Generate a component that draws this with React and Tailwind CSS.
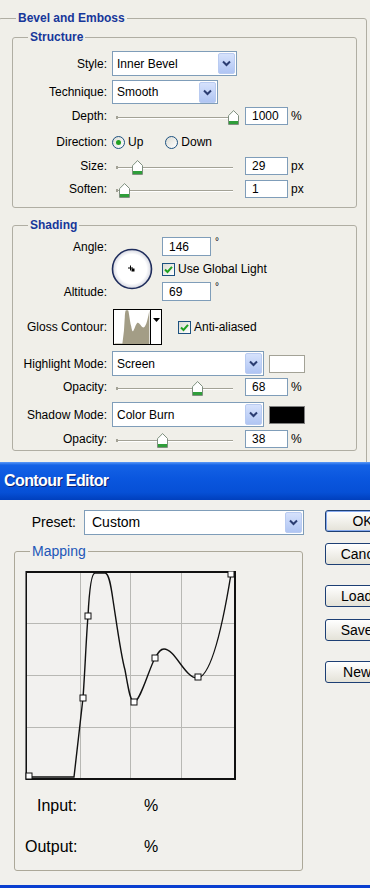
import React from "react";

const CURVE =
  "M4,206 L49,206 L58,127 C60,100 61,70 63,45 C64,25 66,2 70,2 L80,2 C84,2 86,15 88,29 C92,55 96,85 100,99 C103,115 105,131 109,131 C115,131 124,98 130,87 C133,82 135,78 139,78 C150,78 160,107 172,107 C188,107 200,40 206,3";

function Chevron() {
  return (
    <svg width="9" height="7" viewBox="0 0 9 7">
      <path d="M1 1.5 L4.5 5 L8 1.5" stroke="#2b3d72" strokeWidth="2" fill="none" />
    </svg>
  );
}

function DropBtn() {
  return (
    <div className="w-[17px] h-[21px] rounded-[2px] bg-linear-to-b from-[#d6e2fc] to-[#b0c5f3] border border-[#b9cbf1] flex items-center justify-center">
      <Chevron />
    </div>
  );
}

function Select({ text, className }) {
  return (
    <div className={"flex items-center justify-between border border-[#7f9db9] bg-white pl-[4px] pr-[1px] " + className}>
      <span>{text}</span>
      <DropBtn />
    </div>
  );
}

function NumBox({ v, className = "w-[43px] h-[18px]" }) {
  return (
    <div className={"border border-[#7f9db9] bg-white pl-[6px] flex items-center " + className}>{v}</div>
  );
}

function Thumb() {
  return (
    <svg width="11" height="15" viewBox="0 0 11 15">
      <path d="M0.5 5.5 L5.5 0.5 L10.5 5.5 L10.5 14.5 L0.5 14.5 Z" fill="#ffffff" stroke="#7f8f7f" />
      <rect x="1" y="11" width="9" height="3" fill="#2f9e3a" />
      <path d="M1 5.8 L5.5 1.3" stroke="#dfe8df" />
    </svg>
  );
}

function Slider({ pos }) {
  return (
    <div className="relative w-[128px] h-[18px] shrink-0">
      <div className="absolute left-[5px] w-[116px] top-[10px] h-[2px] border-t border-[#a3a296] border-b border-b-white" />
      <div className="absolute left-[4px] top-[9px] w-[2px] h-[3px] bg-[#a3a296]" />
      <div className="absolute top-[3px]" style={{ left: pos - 5 }}>
        <Thumb />
      </div>
    </div>
  );
}

function SliderRow({ label, pos, v, unit, className }) {
  return (
    <Row label={label} className={className}>
      <Slider pos={pos} />
      <NumBox v={v} className="ml-[5px] w-[43px] h-[18px]" />
      <span className="ml-[3px]">{unit}</span>
    </Row>
  );
}

function Row({ label, children, className }) {
  return (
    <div className={"flex items-center " + className}>
      <div className="w-[95px] text-right pr-[1px] shrink-0">{label}</div>
      <div className="ml-[4px] flex items-center">{children}</div>
    </div>
  );
}

function Radio({ checked }) {
  return (
    <span className="w-[13px] h-[13px] rounded-full border border-[#1c5180] bg-linear-to-br from-[#dcdcd4] to-white flex items-center justify-center shrink-0">
      {checked && <span className="w-[5px] h-[5px] rounded-full bg-[#21a121]" />}
    </span>
  );
}

function Check() {
  return (
    <span className="w-[13px] h-[13px] border border-[#1c5180] bg-linear-to-br from-[#dcdcd4] to-white flex items-center justify-center shrink-0">
      <svg width="9" height="9" viewBox="0 0 9 9">
        <path d="M1 4.5 L3.5 7 L8 1.8" stroke="#21a121" strokeWidth="2" fill="none" />
      </svg>
    </span>
  );
}

function AngleDial() {
  return (
    <svg width="42" height="42" viewBox="0 0 42 42">
      <defs>
        <radialGradient id="dialg" cx="50%" cy="50%" r="50%">
          <stop offset="75%" stopColor="#ffffff" />
          <stop offset="100%" stopColor="#d4d6e0" />
        </radialGradient>
      </defs>
      <circle cx="21" cy="21" r="19.5" fill="url(#dialg)" stroke="#1f2d5c" strokeWidth="1.6" />
      <path d="M19.5 17.5v5M17 20h5" stroke="#000" strokeWidth="1" />
      <rect x="20.5" y="20.5" width="3" height="3" fill="#000" />
    </svg>
  );
}

function ContourThumb() {
  return (
    <div className="w-[49px] h-[36px] border border-black bg-white flex shrink-0">
      <svg width="36" height="34" viewBox="0 0 210 209" preserveAspectRatio="none">
        <path d={CURVE + " L206,209 L4,209 Z"} fill="#a39d86" />
      </svg>
      <div className="w-px bg-black" />
      <div className="flex-1 flex justify-center pt-[8px]">
        <svg width="7" height="4" viewBox="0 0 7 4">
          <path d="M0 0 H7 L3.5 4 Z" fill="#000" />
        </svg>
      </div>
    </div>
  );
}

function Graph() {
  const pts = [
    [4, 205],
    [58, 127],
    [63, 45],
    [109, 131],
    [130, 87],
    [173, 106],
    [206, 3],
  ];
  return (
    <svg width="211" height="209" viewBox="0 0 211 209" className="block">
      <rect x="0" y="0" width="211" height="209" fill="#f2f1ef" />
      {[55, 105, 156].map((x) => (
        <line key={"x" + x} x1={x + 0.5} y1="0" x2={x + 0.5} y2="209" stroke="#b8b8b4" />
      ))}
      {[52, 104, 156].map((y) => (
        <line key={"y" + y} x1="0" y1={y + 0.5} x2="211" y2={y + 0.5} stroke="#b8b8b4" />
      ))}
      <rect x="1" y="1" width="209" height="207" fill="none" stroke="#111" strokeWidth="2" />
      <line x1="0.5" y1="0" x2="0.5" y2="209" stroke="#777" />
      <path d={CURVE} fill="none" stroke="#111" strokeWidth="1.4" />
      {pts.map(([x, y], i) => (
        <rect key={i} x={x - 3} y={y - 3} width="6" height="6" fill="#fff" stroke="#111" strokeWidth="1" />
      ))}
    </svg>
  );
}

function Btn({ label, def, className }) {
  return (
    <div
      className={
        "w-[75px] h-[22px] rounded-[3px] border border-[#1d3f74] bg-linear-to-b from-white to-[#e4e2d8] flex items-center justify-center text-[14px] shrink-0 " +
        (def ? "shadow-[inset_0_0_0_1px_#86a9ee] " : "") +
        className
      }
    >
      {label}
    </div>
  );
}

export default function App() {
  return (
    <div className="w-[370px] h-[888px] overflow-hidden bg-[#f0efe9] font-['Liberation_Sans',Arial,sans-serif] text-[12px] text-black">
      {/* Layer style panel */}
      <div className="h-[462px] overflow-hidden pt-[11px]">
        <fieldset className="ml-[-2px] w-[369px] border border-[#b0aea3] rounded-[3px] pl-[13px] pr-[9px] pt-[5px] pb-[24px]">
          <legend className="ml-[4px] px-[2px] font-bold text-[#17379a] leading-[14px]">Bevel and Emboss</legend>

          <fieldset className="border border-[#b0aea3] rounded-[3px] pt-[7px] pb-[9px]">
            <legend className="ml-[15px] px-[2px] font-bold text-[#17379a] leading-[14px]">Structure</legend>
            <Row label="Style:" className="h-[25px]">
              <Select text="Inner Bevel" className="w-[125px] h-[25px]" />
            </Row>
            <Row label="Technique:" className="h-[24px] mt-[4px]">
              <Select text="Smooth" className="w-[106px] h-[24px]" />
            </Row>
            <SliderRow label="Depth:" pos={121} v="1000" unit="%" className="h-[18px] mt-[3px]" />
            <Row label="Direction:" className="h-[22px] mt-[6px]">
              <Radio checked />
              <span className="ml-[3px]">Up</span>
              <span className="ml-[22px]">
                <Radio />
              </span>
              <span className="ml-[3px]">Down</span>
            </Row>
            <SliderRow label="Size:" pos={25} v="29" unit="px" className="h-[18px] mt-[4px]" />
            <SliderRow label="Soften:" pos={12} v="1" unit="px" className="h-[18px] mt-[5px]" />
          </fieldset>

          <fieldset className="mt-[10px] border border-[#b0aea3] rounded-[3px] pt-[5px] pb-[2px]">
            <legend className="ml-[15px] px-[2px] font-bold text-[#17379a] leading-[14px]">Shading</legend>
            <div className="grid grid-cols-[95px_54px_auto] grid-rows-[19px_14px_19px] gap-y-[6px]">
              <div className="col-start-1 row-start-1 text-right pr-[1px] self-center">Angle:</div>
              <div className="col-start-1 row-start-3 text-right pr-[1px] self-center">Altitude:</div>
              <div className="col-start-2 row-start-1 row-span-3 self-center pl-[3px]">
                <AngleDial />
              </div>
              <div className="col-start-3 row-start-1 flex items-start">
                <NumBox v="146" className="w-[49px] h-[19px]" />
                <span className="ml-[4px] text-[10px] leading-[10px]">°</span>
              </div>
              <div className="col-start-3 row-start-2 flex items-center">
                <Check />
                <span className="ml-[3px]">Use Global Light</span>
              </div>
              <div className="col-start-3 row-start-3 flex items-start">
                <NumBox v="69" className="w-[49px] h-[19px]" />
                <span className="ml-[4px] text-[10px] leading-[10px]">°</span>
              </div>
            </div>
            <Row label="Gloss Contour:" className="h-[36px] mt-[8px]">
              <span className="ml-[1px]">
                <ContourThumb />
              </span>
              <span className="ml-[16px]">
                <Check />
              </span>
              <span className="ml-[3px]">Anti-aliased</span>
            </Row>
            <Row label="Highlight Mode:" className="h-[25px] mt-[6px]">
              <Select text="Screen" className="w-[152px] h-[25px]" />
              <div className="ml-[5px] w-[36px] h-[18px] border border-[#a3a296] bg-white" />
            </Row>
            <SliderRow label="Opacity:" pos={85} v="68" unit="%" className="h-[18px] mt-[2px]" />
            <Row label="Shadow Mode:" className="h-[25px] mt-[6px]">
              <Select text="Color Burn" className="w-[152px] h-[25px]" />
              <div className="ml-[5px] w-[36px] h-[18px] border border-[#808080] bg-black" />
            </Row>
            <SliderRow label="Opacity:" pos={50} v="38" unit="%" className="h-[18px] mt-[3px]" />
          </fieldset>
        </fieldset>
      </div>

      {/* Contour Editor title bar */}
      <div className="h-[38px] bg-[linear-gradient(to_bottom,#5b9af8_0%,#1462e6_8%,#0a56de_45%,#0650d6_80%,#003fbd_100%)] flex items-center pl-[4px]">
        <span className="text-white font-bold text-[16px] tracking-[-0.6px] [text-shadow:1px_1px_0_#0b2377]">
          Contour Editor
        </span>
      </div>

      {/* Contour Editor body */}
      <div className="h-[385px] bg-[#f1f0ec] flex pt-[10px] text-[14px]">
        <div className="w-[325px] shrink-0">
          <div className="flex items-center h-[25px]">
            <div className="w-[76px] text-right">Preset:</div>
            <Select text="Custom" className="ml-[8px] w-[220px] h-[25px] pl-[7px]" />
          </div>
          <fieldset className="mt-[8px] ml-[14px] w-[289px] h-[328px] border border-[#aca899] rounded-[3px] pl-[10px] pt-[12px]">
            <legend className="ml-[5px] px-[2px] text-[#2156b8] leading-[16px]">Mapping</legend>
            <Graph />
            <div className="flex items-center h-[20px] mt-[16px] text-[16px]">
              <div className="w-[52px] text-right">Input:</div>
              <div className="ml-[67px]">%</div>
            </div>
            <div className="flex items-center h-[20px] mt-[21px] text-[16px]">
              <div className="w-[52px] text-right">Output:</div>
              <div className="ml-[67px]">%</div>
            </div>
          </fieldset>
        </div>
        <div className="flex flex-col">
          <Btn label="OK" def className="" />
          <Btn label="Cancel" className="mt-[11px]" />
          <Btn label="Load..." className="mt-[20px]" />
          <Btn label="Save..." className="mt-[12px]" />
          <Btn label="New..." className="mt-[20px]" />
        </div>
      </div>
      <div className="h-[3px] bg-[#0a3fd0]" />
    </div>
  );
}
